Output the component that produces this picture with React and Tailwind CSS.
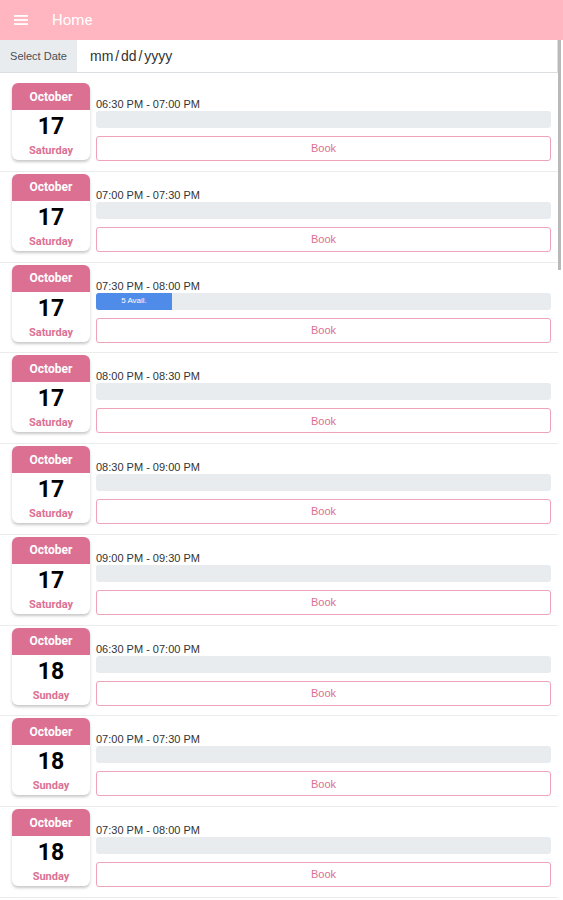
import React from "react";

const slots = [
  { time: "06:30 PM - 07:00 PM", day: "17", weekday: "Saturday", avail: 0 },
  { time: "07:00 PM - 07:30 PM", day: "17", weekday: "Saturday", avail: 0 },
  { time: "07:30 PM - 08:00 PM", day: "17", weekday: "Saturday", avail: 5 },
  { time: "08:00 PM - 08:30 PM", day: "17", weekday: "Saturday", avail: 0 },
  { time: "08:30 PM - 09:00 PM", day: "17", weekday: "Saturday", avail: 0 },
  { time: "09:00 PM - 09:30 PM", day: "17", weekday: "Saturday", avail: 0 },
  { time: "06:30 PM - 07:00 PM", day: "18", weekday: "Sunday", avail: 0 },
  { time: "07:00 PM - 07:30 PM", day: "18", weekday: "Sunday", avail: 0 },
  { time: "07:30 PM - 08:00 PM", day: "18", weekday: "Sunday", avail: 0 },
  { time: "08:00 PM - 08:30 PM", day: "18", weekday: "Sunday", avail: 0 },
];

function DateCard({ day, weekday }) {
  return (
    <div className="w-[78px] h-[77px] shrink-0 rounded-[6px] bg-white shadow-[0_2px_3px_rgba(0,0,0,0.22)] overflow-hidden flex flex-col">
      <div className="h-[27px] bg-[#db7093] text-white text-[12px] font-bold flex items-center justify-center">
        October
      </div>
      <div className="text-[23px] font-bold text-black leading-none text-center mt-[5px]">{day}</div>
      <div className="text-[11px] font-bold text-[#db7093] text-center mt-[5px]">{weekday}</div>
    </div>
  );
}

function SlotRow({ slot }) {
  return (
    <div className="flex pl-[12px] pr-[7px] pt-[2px] pb-[9.75px] border-b border-[#ececec]">
      <DateCard day={slot.day} weekday={slot.weekday} />
      <div className="flex-1 ml-[6px] pt-[14px] flex flex-col font-['Liberation_Sans',Arial,sans-serif]">
        <div className="text-[11px] leading-[14px] text-[#333]">{slot.time}</div>
        <div className="h-[17px] bg-[#e9ecef] rounded-[3px] overflow-hidden flex">
          {slot.avail > 0 && (
            <div className="w-[76px] bg-[#4f8be8] text-white text-[8px] flex items-center justify-center">
              {slot.avail} Avail.
            </div>
          )}
        </div>
        <button className="mt-[8px] h-[25px] w-full rounded-[3px] border border-[#eea3b9] bg-white text-[11px] text-[#db7093]">
          Book
        </button>
      </div>
    </div>
  );
}

export default function App() {
  return (
    <div className="relative h-[900px] w-[563px] overflow-hidden bg-white font-['Roboto',sans-serif]">
      <div className="h-[40px] bg-[#ffb6c1] flex items-center px-[14px]">
        <svg width="14" height="10" viewBox="0 0 14 10" className="shrink-0">
          <rect x="0" y="0" width="14" height="1.8" fill="white" />
          <rect x="0" y="4.1" width="14" height="1.8" fill="white" />
          <rect x="0" y="8.2" width="14" height="1.8" fill="white" />
        </svg>
        <span className="ml-[24px] text-[15px] text-white">Home</span>
      </div>
      <div className="w-[558px]">
        <div className="flex h-[33px] border-b border-r border-[#dcdfe2] font-['Liberation_Sans',Arial,sans-serif]">
          <div className="w-[77px] bg-[#e9ecef] text-[11px] text-[#4a4f55] flex items-center justify-center">
            Select Date
          </div>
          <div className="flex-1 flex items-center pl-[13px] text-[14px] text-[#333] [word-spacing:-2px]">
            mm / dd / yyyy
          </div>
        </div>
        <div className="pt-[8px]">
          {slots.map((slot, i) => (
            <SlotRow key={i} slot={slot} />
          ))}
        </div>
      </div>
      <div className="absolute right-[2px] top-[40px] w-[3px] h-[230px] bg-[#b9b9b9]" />
    </div>
  );
}
